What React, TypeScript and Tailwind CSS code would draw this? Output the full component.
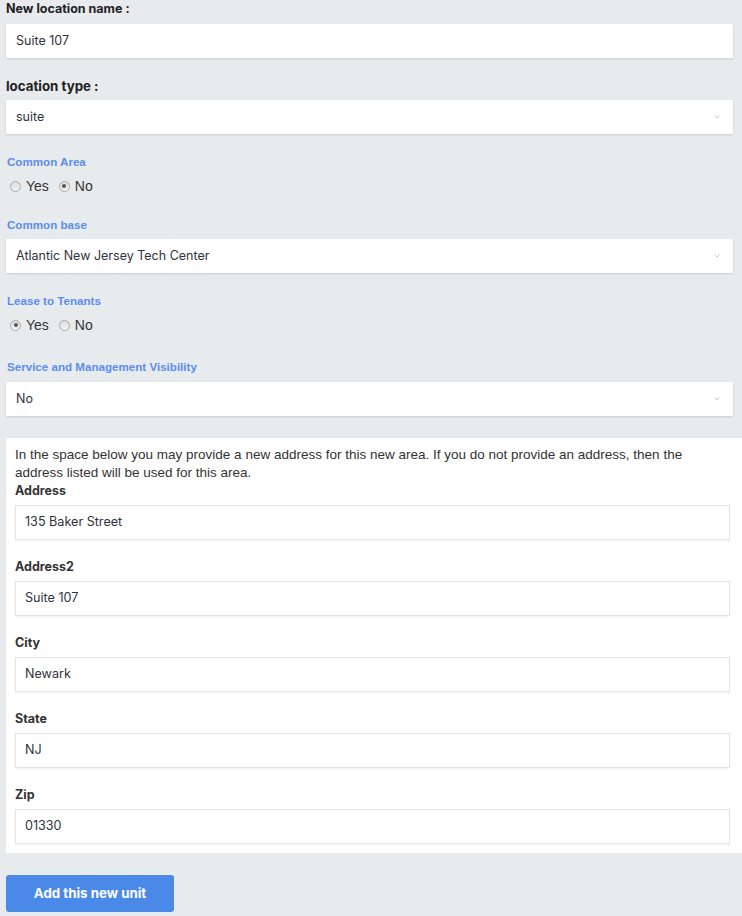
import React from "react";

const Chevron = () => (
  <svg width="6" height="4" viewBox="0 0 6 4" className="shrink-0">
    <path d="M0.5 0.5 L3 3 L5.5 0.5" fill="none" stroke="#c9ccd4" strokeWidth="1" />
  </svg>
);

const TopInput = ({ value, select, className = "" }: { value: string; select?: boolean; className?: string }) => (
  <div
    className={`w-[727px] h-[34px] bg-white flex items-center justify-between pl-[10px] pr-[13px] shadow-[0_1px_2px_rgba(0,0,0,0.12)] text-[12.5px] text-[#2f3340] font-['Inter',sans-serif] ${className}`}
  >
    <span>{value}</span>
    {select && <Chevron />}
  </div>
);

const Radio = ({ checked }: { checked: boolean }) => (
  <span className="w-[11px] h-[11px] rounded-full border border-[#a9a9a9] bg-gradient-to-b from-[#dcdcdc] to-[#f4f4f4] flex items-center justify-center">
    {checked && <span className="w-[4px] h-[4px] rounded-full bg-[#555]" />}
  </span>
);

const RadioRow = ({ yes, className = "" }: { yes: boolean; className?: string }) => (
  <div className={`flex items-center h-[16px] pl-[4px] font-['Liberation_Sans',Arial,sans-serif] text-[14px] text-[#333] ${className}`}>
    <Radio checked={yes} />
    <span className="ml-[5px]">Yes</span>
    <span className="ml-[10px]"><Radio checked={!yes} /></span>
    <span className="ml-[5px]">No</span>
  </div>
);

const BlueLabel = ({ children, className = "" }: { children: React.ReactNode; className?: string }) => (
  <div className={`pl-[1px] leading-[16px] text-[11.6px] font-bold text-[#5b8def] font-['Liberation_Sans',Arial,sans-serif] ${className}`}>
    {children}
  </div>
);

const AddrField = ({ label, value, className = "" }: { label: string; value: string; className?: string }) => (
  <div className={className}>
    <div className="leading-[18px] text-[12.5px] font-bold text-[#333] font-['Inter',sans-serif]">{label}</div>
    <div className="mt-[5px] h-[35px] bg-white border border-[#e2e5e8] shadow-[0_1px_2px_rgba(0,0,0,0.06)] flex items-center pl-[9px] text-[12.6px] text-[#2f3340] font-['Inter',sans-serif]">
      {value}
    </div>
  </div>
);

export default function App() {
  return (
    <div className="w-[742px] min-h-[916px] bg-[#e8ebee] pb-[5px]">
      <div className="pl-[6px]">
        <div className="leading-[18px] text-[12.5px] font-bold text-[#222] font-['Inter',sans-serif]">New location name :</div>
        <TopInput value="Suite 107" className="mt-[6px]" />

        <div className="mt-[19px] leading-[18px] text-[13.3px] font-bold text-[#222] font-['Inter',sans-serif]">location type :</div>
        <TopInput value="suite" select className="mt-[5px]" />

        <BlueLabel className="mt-[20px]">Common Area</BlueLabel>
        <RadioRow yes={false} className="mt-[8px]" />

        <BlueLabel className="mt-[23px]">Common base</BlueLabel>
        <TopInput value="Atlantic New Jersey Tech Center" select className="mt-[6px]" />

        <BlueLabel className="mt-[20px]">Lease to Tenants</BlueLabel>
        <RadioRow yes={true} className="mt-[8px]" />

        <BlueLabel className="mt-[26px]">Service and Management Visibility</BlueLabel>
        <TopInput value="No" select className="mt-[7px]" />

        <div className="mt-[22px] bg-white pl-[9px] pr-[12px] pt-[8px] pb-[9px]">
          <p className="leading-[18px] text-[13.5px] text-[#333] font-['Liberation_Sans',Arial,sans-serif]">
            In the space below you may provide a new address for this new area. If you do not provide an address, then the address listed will be used for this area.
          </p>
          <AddrField label="Address" value="135 Baker Street" />
          <AddrField label="Address2" value="Suite 107" className="mt-[18px]" />
          <AddrField label="City" value="Newark" className="mt-[18px]" />
          <AddrField label="State" value="NJ" className="mt-[18px]" />
          <AddrField label="Zip" value="01330" className="mt-[18px]" />
        </div>

        <button className="mt-[22px] w-[168px] h-[37px] rounded-[3px] bg-[#4a89e8] text-white text-[13.3px] font-bold font-['Inter',sans-serif]">
          Add this new unit
        </button>
      </div>
    </div>
  );
}
